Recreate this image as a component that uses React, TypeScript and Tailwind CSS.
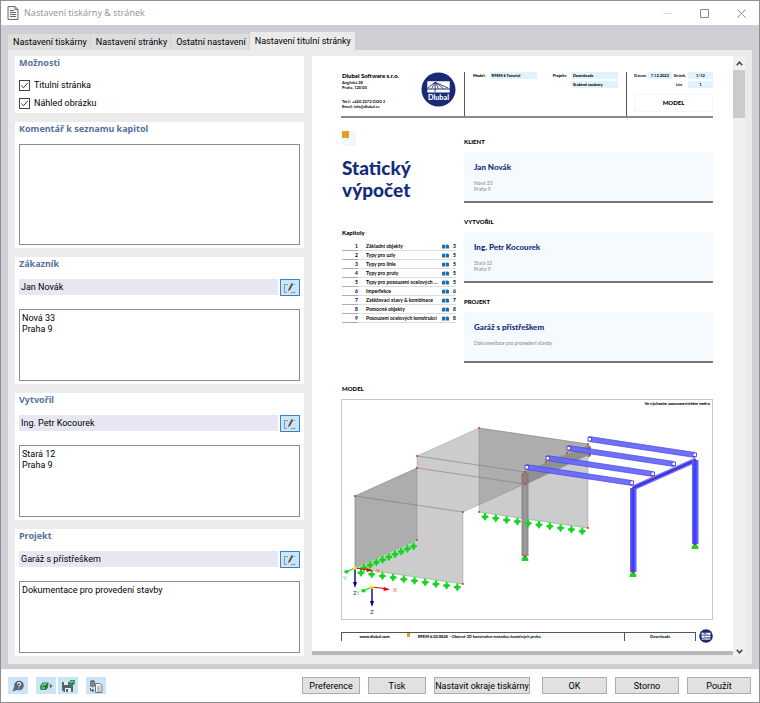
import React, { useState } from "react";

const tabs = [
  "Nastavení tiskárny",
  "Nastavení stránky",
  "Ostatní nastavení",
  "Nastavení titulní stránky",
];

const chapters = [
  { title: "Základní objekty", page: 3 },
  { title: "Typy pro uzly", page: 5 },
  { title: "Typy pro linie", page: 5 },
  { title: "Typy pro pruty", page: 5 },
  { title: "Typy pro posouzení ocelových ...", page: 5 },
  { title: "Imperfekce", page: 6 },
  { title: "Zatěžovací stavy & kombinace", page: 7 },
  { title: "Pomocné objekty", page: 8 },
  { title: "Posouzení ocelových konstrukcí", page: 8 },
];

function TitleBar() {
  return (
    <header className="flex h-6 items-center bg-white pl-[6px] pr-[13px]">
      <svg width="12" height="14" viewBox="0 0 12 14" fill="none" stroke="#6b6b6b">
        <path d="M1 .5h7l3 3v10H1z" fill="#f4f4f4" />
        <path d="M8 .5v3h3M3 4.500h4M3 6.500h6M3 8.500h6M3 10.500h6" />
      </svg>
      <h1 className="ml-[5px] flex-1 font-['Noto_Sans',sans-serif] text-[9px] text-[#999]">
        Nastavení tiskárny &amp; stránek
      </h1>
      <div className="flex items-center gap-[28px]">
        <button aria-label="Minimalizovat" className="block">
          <svg width="9" height="9" stroke="#dcdcdc">
            <path d="M0 4.500h9" />
          </svg>
        </button>
        <button aria-label="Maximalizovat" className="block">
          <svg width="9" height="9" fill="none" stroke="#8a8a8a">
            <path d="M.5 .5h8v8h-8z" />
          </svg>
        </button>
        <button aria-label="Zavřít" className="block">
          <svg width="9" height="9" fill="none" stroke="#8a8a8a">
            <path d="M.5 .5l8 8M8.500 .5l-8 8" />
          </svg>
        </button>
      </div>
    </header>
  );
}

type GroupProps = { title: string; compact?: boolean; children: React.ReactNode };

function Group({ title, compact, children }: GroupProps) {
  return (
    <section className={compact ? "bg-white px-1 pb-px" : "bg-white px-1 pb-[3px]"}>
      <h2
        className={`${compact ? "h-5" : "h-[22px]"} pt-px font-['Noto_Sans',sans-serif] text-[9px] leading-[12px] font-bold text-[#5571a0]`}
      >
        {title}
      </h2>
      {children}
    </section>
  );
}

function CheckOption({ label }: { label: string }) {
  const [on, setOn] = useState(true);
  return (
    <label className="flex h-[18px] items-center gap-1">
      <span className="grid">
        <input
          type="checkbox"
          checked={on}
          onChange={() => setOn(!on)}
          className="col-start-1 row-start-1 h-[11px] w-[11px] appearance-none border border-[#444] bg-white"
        />
        {on && (
          <svg
            className="pointer-events-none col-start-1 row-start-1"
            width="11"
            height="11"
            fill="none"
            stroke="#333"
          >
            <path d="M2.500 5.500l2 2.300 4.300-5" />
          </svg>
        )}
      </span>
      {label}
    </label>
  );
}

function PersonGroup({ title, name, note }: { title: string; name: string; note: string }) {
  return (
    <Group title={title}>
      <div className="flex gap-[2px]">
        <input
          aria-label={title}
          defaultValue={name}
          className="h-4 min-w-0 flex-1 bg-[#e7e7f3] px-[2px]"
        />
        <button
          aria-label="Upravit"
          className="grid h-[17px] w-5 place-items-center border border-[#3b82c4] bg-[#cce4f7]"
        >
          <svg width="14" height="12" viewBox="0 0 14 12" fill="none" stroke="#8a9299">
            <path d="M5 2.500H1.500v8H4M8 10.500h4.500M10.500 2.500h1.500" />
            <path d="M5.200 9.200l.5-2.200L8.600 1.200l1.500.8-3 5.700z" fill="#555" stroke="#555" strokeWidth=".3" />
          </svg>
        </button>
      </div>
      <textarea
        aria-label={`${title} - popis`}
        defaultValue={note}
        className="mt-[13px] block h-[72px] w-full resize-none border border-[#8c8c8c] px-[2px] py-[3px] leading-[11px]"
      />
    </Group>
  );
}

function DlubalLogo({ size }: { size: number }) {
  return (
    <svg width={size} height={size} viewBox="0 0 36 36" className="shrink-0">
      <circle cx="18" cy="18" r="17.500" fill="#182a74" />
      <path d="M6.500 9.500h23v7.500h-23zM6.500 18h23v3h-23z" fill="#fff" />
      <path
        d="M7 16.500L14.500 10.500 28 16.500M14.500 10.500L11 17M14.500 10.500V21M14.500 10.500L18 17M14.500 10.500L23 17"
        fill="none"
        stroke="#182a74"
        strokeWidth=".9"
      />
      <text x="18" y="28.500" textAnchor="middle" fontSize="7.500" fontWeight="900" fill="#fff">
        Dlubal
      </text>
    </svg>
  );
}

function SheetHeader() {
  return (
    <div className="flex h-[46px] border-b-2 border-[#888] text-[4px] leading-[5px] font-bold text-black">
      <div className="flex w-[123px] items-start justify-between pl-px pr-2">
        <div>
          <p className="text-[6px] leading-[8px] font-black">Dlubal Software s.r.o.</p>
          <p>Anglická 28</p>
          <p>Praha, 120 00</p>
          <p className="mt-[9px]">Tel.č: +420 2272 0320 3</p>
          <p>Email: info@dlubal.cz</p>
        </div>
        <DlubalLogo size={35} />
      </div>
      <div className="flex flex-1 justify-between border-l border-[#555] pl-2 pr-2">
        <dl className="flex gap-1 leading-[7px] font-black">
          <dt>Model:</dt>
          <dd className="h-[7px] w-[47px] bg-[#e0f3fd] pl-[2px]">RFEM 6 Tutorial</dd>
        </dl>
        <dl className="flex gap-1 leading-[7px] font-black">
          <dt>Projekt:</dt>
          <dd className="w-[47px]">
            <p className="h-[7px] bg-[#e0f3fd] pl-[2px]">Downloads</p>
            <p className="mt-[2px] h-[7px] bg-[#e0f3fd] pl-[2px]">Stažené soubory</p>
          </dd>
        </dl>
      </div>
      <div className="w-[87px] border-l border-[#555] pl-[7px] leading-[7px]">
        <div className="flex justify-between">
          <span>Datum</span>
          <span className="w-[24px] bg-[#e0f3fd] text-center">7.12.2022</span>
          <span>Stránk.</span>
          <span className="w-[25px] bg-[#e0f3fd] text-center">1/12</span>
        </div>
        <div className="mt-[2px] flex justify-end">
          <span className="w-[12px]">List</span>
          <span className="w-[25px] bg-[#e0f3fd] text-center">1</span>
        </div>
        <p className="mt-[6px] border border-[#eef8fe] text-center text-[6px] leading-[16px] font-black">
          MODEL
        </p>
      </div>
    </div>
  );
}

function BookIcon() {
  return (
    <svg width="7" height="5" viewBox="0 0 7 5" fill="#1b6fa8">
      <path d="M0 1.200Q1.500 .2 3.200 .8V4.600Q1.500 4.200 0 4.600zM7 1.200Q5.500 .2 3.800 .8V4.600Q5.500 4.200 7 4.600z" />
    </svg>
  );
}

function Card({ label, name, lines }: { label: string; name: string; lines: string[] }) {
  return (
    <section className="h-[80px]">
      <h3 className="h-[15px] text-[6px] leading-[10px] font-black text-black">{label}</h3>
      <div className="h-[51px] border-b-2 border-[#777] bg-[#f4fafe] px-[10px] pt-[10px]">
        <p className="text-[8px] leading-[11px] font-black text-[#152b7c]">{name}</p>
        <div className="mt-[7px] text-[5px] leading-[6px] text-[#888]">
          {lines.map((line) => (
            <p key={line}>{line}</p>
          ))}
        </div>
      </div>
    </section>
  );
}

const walls = [
  "355,496 417,468 417,540 355,568",
  "355,496 463,512 463,584 355,568",
  "355,496 417,468 525,484 463,512",
  "417,456 525,472 525,484 417,468",
  "417,456 479,428 588,444 525,472",
  "479,428 588,444 588,528 479,512",
];

const nodes = [
  [355, 496], [417, 468], [417, 456], [479, 428], [463, 512], [463, 584],
  [479, 512], [525, 472], [525, 484], [588, 528], [588, 444], [567, 453],
  [546, 462], [417, 540], [633, 488], [654, 479], [675, 469], [695, 460],
];

const purlins = [
  [526, 467], [547, 458], [568, 448], [589, 439],
];

function row(x: number, y: number, dx: number, dy: number, count: number) {
  return Array.from({ length: count }, (_, i) => [x + dx * i, y + dy * i]);
}

const lineSupports = [
  ...row(364, 567, 6.2, -2.7, 9),
  ...row(361, 572, 10.7, 1.6, 10),
  ...row(485, 516, 10.8, 1.6, 10),
];

function Axes({ x, y, labelX, labelY }: { x: number; y: number; labelX: number; labelY: number }) {
  return (
    <g transform={`translate(${x} ${y})`} fontSize="6" fontWeight="400">
      <path d="M0 0L12 1.500" stroke="#e80000" strokeWidth="1.200" />
      <path d="M18 2.500l-6.500 1.500.4-4z" fill="#e80000" />
      <path d="M0 0V15" stroke="#000080" strokeWidth="1.400" />
      <path d="M0 20l-2-6h4z" fill="#000080" />
      <path d="M0 0L-7 3" stroke="#0fdc1e" strokeWidth="1.200" />
      <ellipse cx="-8.500" cy="3.700" rx="2.300" ry="1.800" fill="#0fdc1e" />
      <circle r="1.800" fill="#f4ee00" />
      <text x="21" y="5" fill="#ff5050">X</text>
      <text x="-2" y="27" fill="#30309a">Z</text>
      <text x={labelX} y={labelY} fill="#3be04a">Y</text>
    </g>
  );
}

function ModelView() {
  return (
    <svg viewBox="342 400 370 219" className="block w-full" role="img" aria-label="Model">
      <g fill="#808080" fillOpacity=".4" stroke="#707070" strokeOpacity=".6" strokeWidth=".5">
        {walls.map((points) => (
          <polygon key={points} points={points} />
        ))}
      </g>
      <path d="M463 584L355 568M588 528L479 512M417 540L355 568" stroke="#7fdf7f" strokeWidth=".6" />
      <path d="M522 473L588 445l3 2v7l-62 29h-7z" fill="#858585" fillOpacity=".85" />
      <path d="M588 445l3 2v9l-3 1.500z" fill="#8c6f68" />
      <path d="M521.500 473h7v83h-7z" fill="#8d8d8d" />
      <path d="M523.500 473h3v83h-3z" fill="#9a9a9a" />
      <path d="M521.500 473h7v11h-7z" fill="#8f6d64" fillOpacity=".6" />

      {purlins.map(([x, y]) => (
        <g key={x}>
          <path
            d={`M${x} ${y - 2.5}l106 16v5l-106-16z`}
            fill="#6868fb"
            stroke="#4747dd"
            strokeWidth=".7"
            fillOpacity={0.95}
          />
          <rect x={x - 1} y={y - 1.5} width="3.500" height="3.500" fill="#fff" stroke="#4747dd" strokeWidth=".9" />
          <rect x={x + 104} y={y + 14} width="3.500" height="3.500" fill="#fff" stroke="#4747dd" strokeWidth=".9" />
        </g>
      ))}
      <path d="M633 488L696 460" stroke="#6c6cff" strokeWidth="5" />
      <path d="M633 488L696 460" stroke="#3535dc" strokeWidth="2" />
      {[
        [633, 488],
        [695, 460],
      ].map(([x, y]) => (
        <g key={x}>
          <rect x={x - 3} y={y} width="6.500" height="84" fill="#6262ff" />
          <rect x={x - 1.5} y={y} width="3" height="84" fill="#4040f8" />
        </g>
      ))}

      <g fill="#19d425">
        {lineSupports.map(([x, y]) => (
          <path
            key={`${x}-${y}`}
            transform={`translate(${x} ${y})`}
            d="M-1-3h2v2l2.500 1v1.500l-1.500 .5-2 3-2-3-1.500-.5V0l2.500-1z"
          />
        ))}
        {[
          [525, 556],
          [633, 572],
          [695, 544],
        ].map(([x, y]) => (
          <path key={x} transform={`translate(${x} ${y})`} d="M-1.500 0h3l1.800 3v2h-6.600v-2z" />
        ))}
      </g>
      <g fill="#f01818">
        {nodes.map(([x, y]) => (
          <rect key={`${x}-${y}`} x={x - 0.8} y={y - 0.8} width="1.600" height="1.600" />
        ))}
        <path d="M524 555.500h2v1.500h-2zM632 571.500h2v1.500h-2zM694 543.500h2v1.500h-2z" />
      </g>
      <Axes x={355} y={568} labelX={-12} labelY={12} />
      <Axes x={372} y={587} labelX={-16} labelY={8} />
      <text x="710" y="405" textAnchor="end" fontSize="4" fontWeight="900" fill="#000">
        Ve výchozím axonometrickém směru
      </text>
    </svg>
  );
}

function Sheet() {
  return (
    <article className="flex-1 bg-white pt-4 pr-5 pl-[29px] font-[Lato,sans-serif]">
      <SheetHeader />
      <div className="flex">
        <div className="w-[123px] pt-[13px] pl-px">
          <svg width="14" height="15">
            <path d="M0 0h14v15H0z" fill="#f0f8fe" />
            <path d="M0 0h7v7H0z" fill="#e5a023" />
          </svg>
          <h2 className="mt-[11px] text-[19px] leading-[22px] font-black text-[#152b7c]">
            Statický
            <br />
            výpočet
          </h2>
          <h3 className="mt-[27px] text-[6px] leading-[10px] font-black text-black">Kapitoly</h3>
          <table className="mt-1 w-[114px] table-fixed border-collapse text-[5px] leading-[8px] font-bold text-black">
            <tbody>
              {chapters.map((chapter, i) => (
                <tr key={chapter.title} className="border-b border-[#dedede]">
                  <td className="w-4 border-b border-[#aaaacb] p-0 text-right">{i + 1}</td>
                  <td className="py-0 pl-2 whitespace-nowrap">{chapter.title}</td>
                  <td className="w-[7px] p-0">
                    <BookIcon />
                  </td>
                  <td className="w-[7px] p-0 text-right">{chapter.page}</td>
                </tr>
              ))}
            </tbody>
          </table>
        </div>
        <div className="flex-1 pt-[19px]">
          <Card label="KLIENT" name="Jan Novák" lines={["Nová 33", "Praha 9"]} />
          <Card label="VYTVOŘIL" name="Ing. Petr Kocourek" lines={["Stará 12", "Praha 9"]} />
          <Card
            label="PROJEKT"
            name="Garáž s přístřeškem"
            lines={["Dokumentace pro provedení stavby"]}
          />
        </div>
      </div>
      <h3 className="mt-[7px] pl-px text-[6px] leading-[10px] font-black text-black">MODEL</h3>
      <div className="mt-[5px] border border-[#c8c8c8]">
        <ModelView />
      </div>
      <footer className="mt-[9px] flex items-center pb-[5px] text-[4px] leading-[8px] font-bold text-black">
        <div className="flex flex-1 border-t border-[#555]">
          <span className="w-[66px] border-l border-[#555] text-center text-[4px] font-black">
            www.dlubal.com
          </span>
          <svg width="3" height="4" className="shrink-0">
            <path d="M0 0h3v4H0z" fill="#e5a023" />
          </svg>
          <span className="flex-1 bg-[#f7fbfe] pl-2">
            <b className="font-black">RFEM 6.02.0045</b> - Obecné 3D konstrukce metodou konečných prvků
          </span>
          <span className="w-[72px] border-x border-[#555] bg-[#f7fbfe] text-center">Downloads</span>
        </div>
        <div className="ml-[3px]">
          <DlubalLogo size={14} />
        </div>
      </footer>
    </article>
  );
}

function ScrollBar() {
  return (
    <div className="flex w-3 flex-col items-center justify-between bg-[#f0f0f0]">
      <div className="w-full">
        <button aria-label="Nahoru" className="grid h-[14px] w-full place-items-center">
          <svg width="7" height="5" fill="none" stroke="#444" strokeWidth="1.500">
            <path d="M.7 4.200L3.500 1.200 6.300 4.200" />
          </svg>
        </button>
        <div className="h-12 bg-[#cbcbcb]" />
      </div>
      <button aria-label="Dolů" className="grid h-[11px] w-full place-items-center">
        <svg width="7" height="5" fill="none" stroke="#444" strokeWidth="1.500">
          <path d="M.7 .8L3.500 3.800 6.300 .8" />
        </svg>
      </button>
    </div>
  );
}

const toolClass = "grid h-[17px] w-5 place-items-center bg-[#cce4f7]";
const buttonClass = "h-[17px] border border-[#adadad] bg-[#e1e1e1] text-center whitespace-nowrap";

function BottomBar() {
  return (
    <footer className="flex items-center bg-white py-2 pr-2 pl-[7px]">
      <button aria-label="Nápověda" className={toolClass}>
        <svg width="14" height="14" viewBox="0 0 14 14">
          <path d="M3.500 7L1.500 12.500 7.500 10.500z" fill="#5e6770" />
          <circle cx="8" cy="6.500" r="4.800" fill="#5e6770" />
          <path d="M6.300 5.200Q6.400 3.600 8 3.600t1.700 1.400Q9.700 6 8 6.800V7.600M8 8.500v1.100" fill="none" stroke="#e6f0f8" strokeWidth="1.100" />
        </svg>
      </button>
      <button aria-label="Jednotky" className={`${toolClass} ml-2`}>
        <svg width="14" height="12" viewBox="0 0 14 12">
          <path d="M1 6l2.500-3.500H9.500L9 8 6.500 10H1.500z" fill="#2f8a4c" />
          <path d="M3 6l1.200-1.800H8M3 8h3" stroke="#a5e6b7" fill="none" />
          <path d="M6.500 9.500V6.500l2.500-3" fill="none" stroke="#1c5b30" />
          <path d="M10.800 3.500v5l2.700-2.500z" fill="#666" />
        </svg>
      </button>
      <button aria-label="Uložit" className={`${toolClass} ml-[2px]`}>
        <svg width="14" height="14" viewBox="0 0 14 14">
          <path d="M1 3h8v4h3v6H3l-2-2z" fill="#59626a" />
          <path d="M3 3h4v3H3zM4 9h6v4H4z" fill="#e5eef5" />
          <path d="M5 10h2v3H5z" fill="#59626a" />
          <path d="M8 3.500l1.500-2.500H14l-.5 4-2 2H7.500z" fill="#2f8a4c" />
          <path d="M9.500 4l.8-1.500h2" stroke="#a5e6b7" fill="none" />
        </svg>
      </button>
      <button aria-label="Kopírovat" className={`${toolClass} ml-2`}>
        <svg width="14" height="14" viewBox="0 0 14 14">
          <path d="M1 2q2.500-2 5 0v5q-2.500 2-5 0z" fill="#697078" />
          <path d="M1.500 3.500q2 1 4 0M1.500 5.500q2 1 4 0" stroke="#b5c0c9" fill="none" strokeWidth=".6" />
          <path d="M6.500 4.500h4l2.500 2v7H6.500z" fill="#f3f5f7" stroke="#777" />
          <path d="M8 8h3.500M8 10h3.500M8 12h3.500" stroke="#777" strokeWidth=".8" />
          <path d="M1.500 9v2.500h2" fill="none" stroke="#555" />
          <path d="M3 9.800l2.500 1.700L3 13.200z" fill="#555" />
        </svg>
      </button>
      <div className="ml-auto flex gap-2">
        <button className={`${buttonClass} w-[58px]`}>Preference</button>
        <button className={`${buttonClass} w-[58px]`}>Tisk</button>
        <button className={`${buttonClass} w-[96px]`}>Nastavit okraje tiskárny</button>
        <button className={`${buttonClass} ml-1 w-[65px]`}>OK</button>
        <button className={`${buttonClass} w-[64px]`}>Storno</button>
        <button className={`${buttonClass} w-[64px]`}>Použít</button>
      </div>
    </footer>
  );
}

export default function App() {
  const [active, setActive] = useState(3);

  return (
    <div className="flex min-h-screen flex-col border border-[#8f8f8f] bg-white font-[Roboto,sans-serif] text-[9px] leading-[12px] text-black">
      <TitleBar />
      <main className="flex flex-1 flex-col bg-[#cfced4] px-[7px] pt-[7px] pb-[5px]">
        <nav className="flex items-end">
          {tabs.map((tab, i) => (
            <button
              key={tab}
              onClick={() => setActive(i)}
              className={
                i === active
                  ? "h-[18px] bg-[#ebebeb] pr-1 pl-[5px]"
                  : "h-[16px] border-r border-[#d2d2d2] bg-[#dedede] pr-[3px] pl-[5px]"
              }
            >
              {tab}
            </button>
          ))}
        </nav>
        <div className="flex flex-1 gap-2 bg-[#ebebeb] px-[7px] pt-[6px] pb-[7px]">
          <div className="flex w-[289px] shrink-0 flex-col gap-[9px]">
            <Group title="Možnosti" compact>
              <CheckOption label="Titulní stránka" />
              <CheckOption label="Náhled obrázku" />
            </Group>
            <Group title="Komentář k seznamu kapitol">
              <textarea
                aria-label="Komentář k seznamu kapitol"
                className="block h-[101px] w-full resize-none border border-[#8c8c8c]"
              />
            </Group>
            <PersonGroup title="Zákazník" name="Jan Novák" note={"Nová 33\nPraha 9"} />
            <PersonGroup title="Vytvořil" name="Ing. Petr Kocourek" note={"Stará 12\nPraha 9"} />
            <PersonGroup
              title="Projekt"
              name="Garáž s přístřeškem"
              note="Dokumentace pro provedení stavby"
            />
          </div>
          <div className="flex min-w-0 flex-1">
            <div className="flex min-w-0 flex-1 flex-col">
              <Sheet />
              <div className="mb-[2px] h-1 bg-[#b9b9b9]" />
            </div>
            <ScrollBar />
          </div>
        </div>
      </main>
      <BottomBar />
    </div>
  );
}
